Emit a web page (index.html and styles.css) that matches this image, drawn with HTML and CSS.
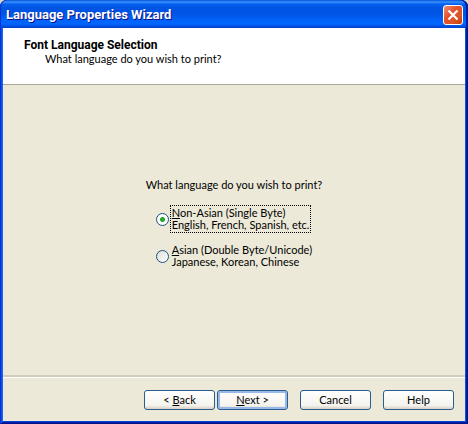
FILE: index.html
```html
<!DOCTYPE html>
<html lang="en">

<head>
    <meta charset="UTF-8">
    <meta name="viewport" content="width=device-width, initial-scale=1.0">
    <title>Language Properties Wizard</title>
    <link rel="stylesheet" href="styles.css">
</head>

<body>
    <form class="window">
        <div class="titlebar">
            <h1>Language Properties Wizard</h1>
            <button type="button" class="close" aria-label="Close">
                <svg viewBox="0 0 18 18" width="18" height="18">
                    <path d="M4.5 4.5 L13.5 13.5 M13.5 4.5 L4.5 13.5" stroke="#fff" stroke-width="2.2" fill="none"/>
                </svg>
            </button>
        </div>

        <div class="header">
            <h2>Font Language Selection</h2>
            <p>What language do you wish to print?</p>
        </div>

        <div class="content">
            <fieldset class="choices">
                <legend>What language do you wish to print?</legend>
                <div class="option">
                    <input type="radio" name="language" id="single" checked>
                    <label for="single" class="focused"><u>N</u>on-Asian (Single Byte)<br>English, French, Spanish, etc.</label>
                </div>
                <div class="option">
                    <input type="radio" name="language" id="double">
                    <label for="double"><u>A</u>sian (Double Byte/Unicode)<br>Japanese, Korean, Chinese</label>
                </div>
            </fieldset>
        </div>

        <div class="footer">
            <div class="steps">
                <button type="button">&lt; <u>B</u>ack</button>
                <button type="button" class="default"><u>N</u>ext &gt;</button>
            </div>
            <button type="button">Cancel</button>
            <button type="button">Help</button>
        </div>
    </form>
</body>

</html>
```

FILE: styles.css
```css
* {
    box-sizing: border-box;
}

body {
    margin: 0;
    background: #ddd9c3;
    color: #000;
    font-family: Lato, "Liberation Sans", sans-serif;
    font-size: 11px;
    line-height: 12px;
}

h1,
h2,
p {
    margin: 0;
}

.window {
    display: flex;
    flex-direction: column;
    min-height: 100vh;
    padding: 0 3px 3px;
    background: #ece9d8;
    border-radius: 7px 7px 0 0;
    /* blue window frame */
    box-shadow: inset 1px 0 #0831d9, inset -1px 0 #00138c, inset 0 -1px #00138c, inset 2px 0 #0a4ee4, inset -2px 0 #001ea0, inset 0 -2px #001ea0, inset 3px 0 #166aee, inset -3px 0 #0855dd, inset 0 -3px #0841d8;
}

.titlebar {
    display: flex;
    align-items: center;
    justify-content: space-between;
    height: 28px;
    margin: 0 -3px;
    padding: 2px 5px 0 6px;
    border-radius: 7px 7px 0 0;
    background: linear-gradient(#0453d8 0, #3c90ff 2px, #0562ee 4px, #0054e3 8px, #0054e3 14px, #0063fa 20px, #0066ff 24px, #0052e0 26px, #003dd0 28px);
    box-shadow: inset 1px 0 #0831d9, inset -2px 0 #001ea0;
}

.titlebar h1 {
    color: #fff;
    font-family: Roboto, sans-serif;
    font-size: 13px;
    line-height: 16px;
    text-shadow: 1px 1px #0f1089;
}

.close {
    width: 20px;
    height: 20px;
    padding: 0;
    border: 1px solid #fff;
    border-radius: 3px;
    background: linear-gradient(135deg, #ee9077, #e5502c 40%, #dc5527 70%, #c23c08);
}

.close svg {
    display: block;
}

.header {
    height: 57px;
    padding: 10px 21px;
    background: #fff;
    border-bottom: 1px solid #aca899;
}

.header h2 {
    font-family: Roboto, sans-serif;
    font-size: 12px;
    line-height: 14px;
}

.header p {
    padding-left: 21px;
    line-height: 14px;
}

.content {
    display: flex;
    flex: 1;
    flex-direction: column;
    align-items: center;
    padding-top: 94px;
}

.choices {
    margin: 0;
    padding: 0;
    border: 0;
}

.choices legend {
    padding: 0;
    margin-bottom: 14px;
}

.option {
    display: flex;
    align-items: center;
    gap: 1px;
    margin: 0 0 9px 10px;
}

.option input {
    appearance: none;
    width: 13px;
    height: 13px;
    margin: 0;
    border: 1px solid #1d5281;
    border-radius: 50%;
    background: linear-gradient(135deg, #dcdcd7, #fff);
}

.option input:checked {
    background: radial-gradient(circle, #2cb52c 0, #21a121 2px, #fff 3px);
}

.option label {
    padding: 1px;
    border: 1px solid transparent;
}

.option .focused {
    border: 1px dotted #000;
}

.footer {
    display: flex;
    justify-content: flex-end;
    gap: 12px;
    padding: 13px 11px 11px;
    border-top: 2px solid #d0cdbc;
    box-shadow: inset 0 1px #fff;
}

.steps {
    display: flex;
    gap: 2px;
}

.footer button {
    width: 71px;
    height: 20px;
    padding: 0;
    border: 1px solid #2a5c8c;
    border-radius: 3px;
    background: linear-gradient(#fff, #f4f3ee 80%, #d8d0c4);
    color: #000;
    font: inherit;
}

.footer .default {
    box-shadow: inset 0 0 0 2px #98b8ea;
}
```
